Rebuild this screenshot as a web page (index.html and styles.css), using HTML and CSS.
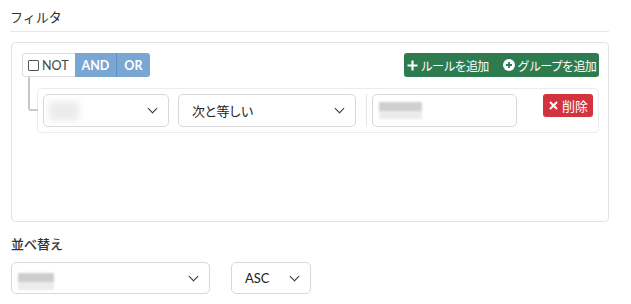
FILE: index.html
```html
<!DOCTYPE html>
<html>
  <head>
    <link rel="stylesheet" href="styles.css">
  </head>
  <body>
    <div class="page">
      <h3 class="section-title">フィルタ</h3>

      <div class="filter-box">
        <div class="group-header">
          <div class="cond-group">
            <label class="btn-not"><span class="checkbox"></span>NOT</label>
            <span class="btn-cond">AND</span>
            <span class="btn-cond">OR</span>
          </div>
          <div class="group-actions">
            <span class="btn-add">
              <svg width="11" height="11" viewBox="0 0 11 11"><path d="M5.5 0.5v10M0.5 5.5h10" stroke="#fff" stroke-width="2.2"/></svg>
              ルールを追加
            </span>
            <span class="btn-add">
              <svg width="12" height="12" viewBox="0 0 12 12"><circle cx="6" cy="6" r="6" fill="#fff"/><path d="M6 3v6M3 6h6" stroke="#2e7b50" stroke-width="1.8"/></svg>
              グループを追加
            </span>
          </div>
        </div>

        <div class="rules-list">
          <div class="rule">
            <div class="select select-field"><span class="blur blur-field"></span><span class="chevron"></span></div>
            <div class="select select-op"><span>次と等しい</span><span class="chevron"></span></div>
            <div class="rule-sep"></div>
            <div class="input-value"><span class="blur blur-value"></span></div>
            <span class="btn-delete">
              <svg width="9" height="9" viewBox="0 0 9 9"><path d="M1 1l7 7M8 1l-7 7" stroke="#fff" stroke-width="2"/></svg>
              削除
            </span>
          </div>
        </div>
      </div>

      <h3 class="section-title sort-title">並べ替え</h3>
      <div class="sort-row">
        <div class="select select-sort"><span class="blur blur-sort"></span><span class="chevron"></span></div>
        <div class="select select-dir"><span class="latin">ASC</span><span class="chevron"></span></div>
      </div>
    </div>
  </body>
</html>
```

FILE: styles.css
```css
body {
  margin: 0;
  font-family: Lato, "Noto Sans CJK JP", sans-serif;
  color: #333;
  background: #fff;
}

.page {
  padding: 8px 22px 0 10px;
}

.section-title {
  margin: 0;
  font-size: 13px;
  font-weight: normal;
  line-height: 18px;
  padding-bottom: 5px;
  border-bottom: 1px solid #e6e6e6;
  font-family: "Noto Sans CJK JP", sans-serif;
}

.filter-box {
  margin: 10px 0 0 1px;
  height: 158px;
  border: 1px solid #e2e2e2;
  border-radius: 4px;
  padding: 10px 9px 10px 10px;
}

.group-header {
  display: flex;
  justify-content: space-between;
  align-items: center;
  height: 24px;
}

.cond-group {
  display: flex;
  height: 24px;
  font-size: 12.5px;
  border-radius: 3px;
  overflow: hidden;
}

.btn-not {
  display: flex;
  align-items: center;
  gap: 3px;
  padding: 0 6px 0 5px;
  border: 1px solid #ddd;
  border-right: none;
  border-radius: 3px 0 0 3px;
  color: #444;
}

.checkbox {
  width: 9px;
  height: 9px;
  border: 1px solid #555;
  border-radius: 1px;
}

.btn-cond {
  display: flex;
  align-items: center;
  padding: 0 7px;
  background: #7aa6d3;
  color: #fff;
  font-weight: bold;
}

.btn-cond + .btn-cond {
  border-left: 1px solid #5f8fc0;
}

.group-actions {
  display: flex;
  height: 24px;
  background: #2e7b50;
  border-radius: 3px;
}

.btn-add {
  display: flex;
  align-items: center;
  gap: 3px;
  padding: 0 3px;
  color: #fff;
  font-size: 12px;
  font-family: "Noto Sans CJK JP", sans-serif;
  letter-spacing: -0.7px;
}

.btn-add + .btn-add {
  margin-left: 8px;
}

.rules-list {
  margin: 11px 0 0 15px;
}

.rule {
  position: relative;
  display: flex;
  align-items: flex-start;
  height: 33px;
  padding: 5px;
  border: 1px solid #ececec;
  border-radius: 4px;
}

.rule::before {
  content: "";
  position: absolute;
  left: -10px;
  top: -12px;
  width: 8px;
  height: 32px;
  border-left: 2px solid #c8c8c8;
  border-bottom: 2px solid #c8c8c8;
  border-bottom-left-radius: 3px;
}

.select {
  display: flex;
  align-items: center;
  justify-content: space-between;
  box-sizing: border-box;
  height: 33px;
  padding: 0 12px 0 13px;
  border: 1px solid #d8d8d8;
  border-radius: 5px;
  font-size: 13px;
  font-family: "Noto Sans CJK JP", sans-serif;
  color: #222;
  background: #fff;
}

.select-field {
  width: 126px;
  padding-left: 5px;
}

.select-op {
  width: 178px;
  margin-left: 9px;
  letter-spacing: -0.8px;
}

.rule-sep {
  width: 1px;
  height: 33px;
  margin: 0 5px 0 10px;
  background: #e4e4e4;
}

.input-value {
  box-sizing: border-box;
  width: 145px;
  height: 33px;
  padding: 6px;
  border: 1px solid #d8d8d8;
  border-radius: 5px;
}

.chevron {
  width: 6px;
  height: 6px;
  margin-top: -4px;
  border-right: 1.6px solid #333;
  border-bottom: 1.6px solid #333;
  transform: rotate(45deg);
}

.blur {
  display: block;
  background: #d0d0d0;
  filter: blur(3px);
}

.blur-field {
  width: 30px;
  height: 20px;
  background: #ececec;
}

.blur-value {
  width: 43px;
  height: 9px;
  margin-top: 1px;
  background: #cfcfcf;
  box-shadow: 0 8px 0 #ececec;
  filter: blur(1px);
}

.btn-delete {
  display: flex;
  align-items: center;
  gap: 4px;
  margin-left: auto;
  height: 23px;
  padding: 0 5px 0 6px;
  background: #d2333f;
  color: #fff;
  border-radius: 3px;
  font-size: 13px;
  font-family: "Noto Sans CJK JP", sans-serif;
}

.sort-title {
  margin-top: 13px;
  border-bottom: none;
  font-weight: 500;
  padding-left: 1px;
}

.sort-row {
  display: flex;
  gap: 21px;
  margin: 4px 0 0 1px;
}

.select-sort {
  width: 199px;
  height: 32px;
  padding-left: 6px;
}

.blur-sort {
  width: 36px;
  height: 9px;
  margin-top: -2px;
  background: #cdcdcd;
  box-shadow: 0 8px 0 #ececec;
  filter: blur(1px);
}

.select-dir {
  width: 80px;
  height: 32px;
}

.latin {
  font-family: Lato, sans-serif;
  font-size: 13px;
}
```
